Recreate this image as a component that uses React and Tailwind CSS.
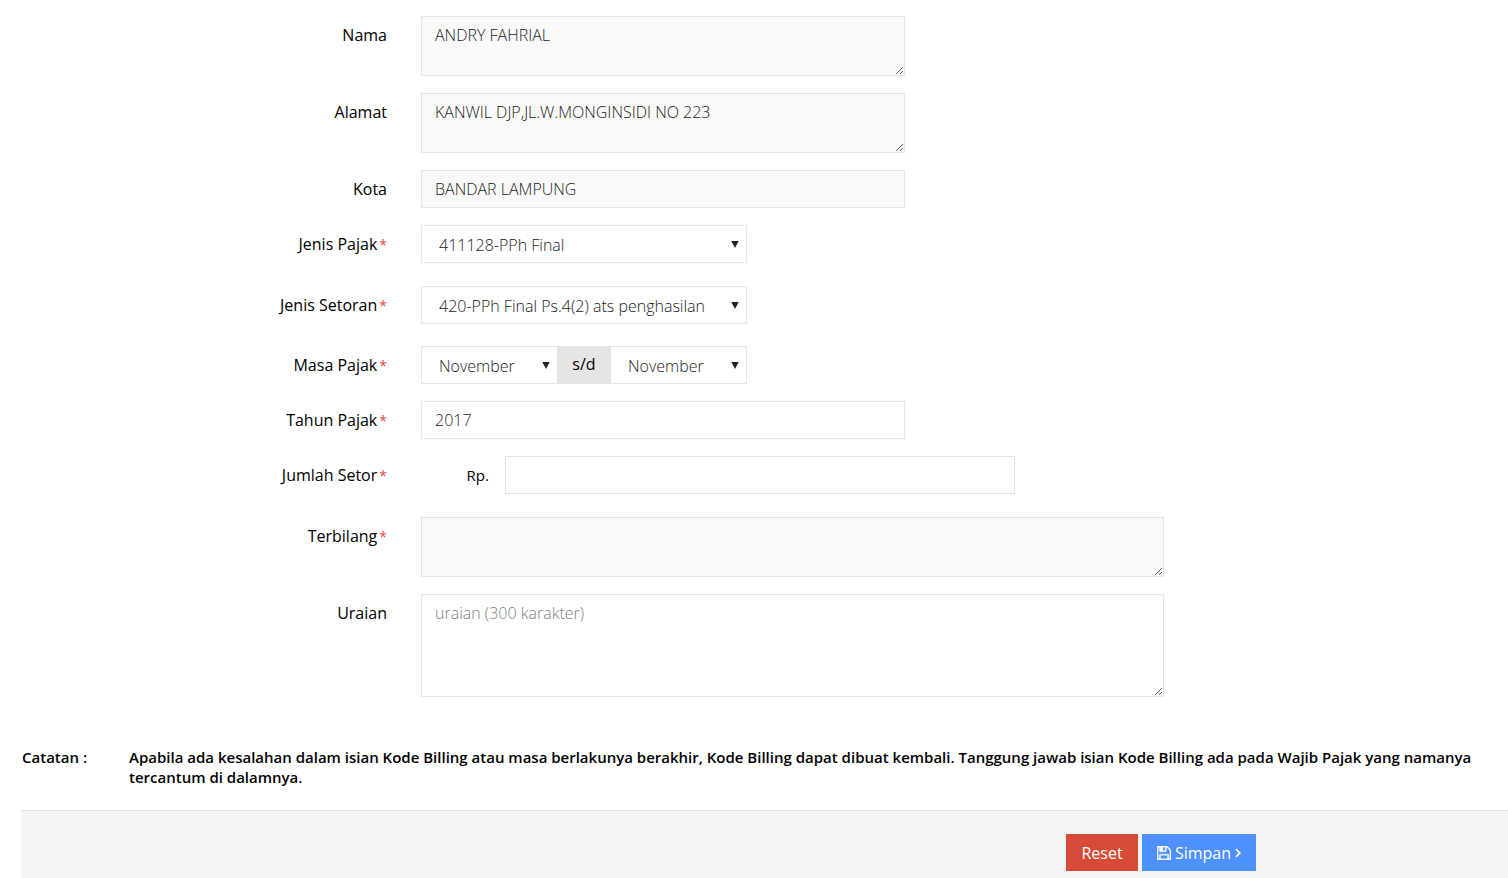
import { useState } from 'react'
import clsx from 'clsx'

const MONTHS = [
  'Januari', 'Februari', 'Maret', 'April', 'Mei', 'Juni',
  'Juli', 'Agustus', 'September', 'Oktober', 'November', 'Desember',
]

const control = 'block w-full border border-[#e5e5e5] px-[13px] text-base leading-[22px] font-light text-[#1a1a1a] outline-none placeholder:text-[#808080] focus:border-[#999]'

function FormRow({ id, label, required, gap = 'mb-[17px]', children }) {
  return (
    <div className={clsx('flex items-start', gap)}>
      <label htmlFor={id} className="w-1/4 shrink-0 pt-2 pr-[17px] text-right leading-[22px]">
        {label}
        {required && <span className="pl-0.5 text-sm text-[#e84848]">*</span>}
      </label>
      <div className="min-w-0 flex-1 px-[17px]">{children}</div>
    </div>
  )
}

function TextInput({ className, ...props }) {
  return <input type="text" className={clsx(control, 'h-[38px] read-only:bg-[#f9f9f9]', className)} {...props} />
}

function TextArea({ className, ...props }) {
  return <textarea className={clsx(control, 'resize py-[7px] read-only:bg-[#f9f9f9]', className)} {...props} />
}

function Select({ className, children, ...props }) {
  return (
    <div className={clsx('relative', className)}>
      <select
        className="block h-[38px] w-full appearance-none border border-[#e5e5e5] bg-white pt-0.5 pr-6 pl-[17px] text-base leading-[22px] font-light text-[#1a1a1a] outline-none"
        {...props}
      >
        {children}
      </select>
      <svg viewBox="0 0 8 7" className="pointer-events-none absolute top-4 right-2 h-[7px] w-2 fill-[#222]">
        <path d="M0.3 0h7.4L4 7z" />
      </svg>
    </div>
  )
}

function MonthSelect(props) {
  return (
    <Select className="flex-1" {...props}>
      {MONTHS.map((month) => (
        <option key={month}>{month}</option>
      ))}
    </Select>
  )
}

function SaveIcon() {
  return (
    <svg viewBox="0 0 1536 1536" className="size-3.5 fill-current stroke-current" strokeWidth="40">
      <path
        transform="translate(0 1408) scale(1 -1)"
        d="M384 0h768v384h-768v-384zM1280 0h128v896q0 14 -10 38.5t-20 34.5l-281 281q-10 10 -34 20t-39 10v-416q0 -40 -28 -68t-68 -28h-576q-40 0 -68 28t-28 68v416h-128v-1280h128v416q0 40 28 68t68 28h832q40 0 68 -28t28 -68v-416zM896 928v320q0 13 -9.5 22.5t-22.5 9.5h-192q-13 0 -22.5 -9.5t-9.5 -22.5v-320q0 -13 9.5 -22.5t22.5 -9.5h192q13 0 22.5 9.5t9.5 22.5zM1536 896v-928q0 -40 -28 -68t-68 -28h-1344q-40 0 -68 28t-28 68v1344q0 40 28 68t68 28h928q40 0 88 -20t76 -48l280 -280q28 -28 48 -76t20 -88z"
      />
    </svg>
  )
}

function AngleRightIcon() {
  return (
    <svg viewBox="0 0 6 10" className="h-2.5 w-1.5 fill-none stroke-current" strokeWidth="1.8">
      <path d="M1 1.2L4.8 5L1 8.8" />
    </svg>
  )
}

export default function App() {
  const [masaAwal, setMasaAwal] = useState('November')
  const [masaAkhir, setMasaAkhir] = useState('November')

  return (
    <form
      className="flex min-h-screen flex-col bg-white font-['Open_Sans',sans-serif] text-base text-black"
      onSubmit={(e) => e.preventDefault()}
    >
      <div className="pt-4 pl-9">
        <FormRow id="nama" label="Nama">
          <TextArea id="nama" className="h-[60px] max-w-[484px]" defaultValue="ANDRY FAHRIAL" readOnly />
        </FormRow>
        <FormRow id="alamat" label="Alamat">
          <TextArea id="alamat" className="h-[60px] max-w-[484px]" defaultValue="KANWIL DJP,JL.W.MONGINSIDI NO 223" readOnly />
        </FormRow>
        <FormRow id="kota" label="Kota">
          <TextInput id="kota" className="max-w-[484px]" defaultValue="BANDAR LAMPUNG" readOnly />
        </FormRow>
        <FormRow id="jenis-pajak" label="Jenis Pajak" required gap="mb-[23px]">
          <Select id="jenis-pajak" className="max-w-[326px]">
            <option>411128-PPh Final</option>
          </Select>
        </FormRow>
        <FormRow id="jenis-setoran" label="Jenis Setoran" required gap="mb-[22px]">
          <Select id="jenis-setoran" className="max-w-[326px]">
            <option>420-PPh Final Ps.4(2) ats penghasilan</option>
          </Select>
        </FormRow>
        <FormRow id="masa-awal" label="Masa Pajak" required>
          <div className="flex max-w-[326px]">
            <MonthSelect id="masa-awal" value={masaAwal} onChange={(e) => setMasaAwal(e.target.value)} />
            <label htmlFor="masa-akhir" className="w-[52px] bg-[#e5e5e5] pt-[7px] text-center leading-[22px]">s/d</label>
            <MonthSelect id="masa-akhir" value={masaAkhir} onChange={(e) => setMasaAkhir(e.target.value)} />
          </div>
        </FormRow>
        <FormRow id="tahun" label="Tahun Pajak" required>
          <TextInput id="tahun" className="max-w-[484px]" defaultValue="2017" />
        </FormRow>
        <FormRow id="jumlah" label="Jumlah Setor" required gap="mb-[23px]">
          <div className="flex items-center gap-4">
            <span className="w-[68px] shrink-0 text-right text-[15px] leading-[22px]">Rp.</span>
            <TextInput id="jumlah" className="max-w-[510px]" />
          </div>
        </FormRow>
        <FormRow id="terbilang" label="Terbilang" required>
          <TextArea id="terbilang" className="h-[60px] max-w-[743px]" readOnly />
        </FormRow>
        <FormRow id="uraian" label="Uraian">
          <TextArea id="uraian" className="h-[103px] max-w-[743px]" placeholder="uraian (300 karakter)" maxLength={300} />
        </FormRow>
      </div>

      <div className="flex pt-[33px] pr-4 pb-[23px] pl-[22px] text-[15px] leading-5 font-semibold">
        <p className="w-[107px] shrink-0">Catatan :</p>
        <p>
          Apabila ada kesalahan dalam isian Kode Billing atau masa berlakunya berakhir, Kode Billing dapat dibuat
          kembali. Tanggung jawab isian Kode Billing ada pada Wajib Pajak yang namanya tercantum di dalamnya.
        </p>
      </div>

      <div className="ml-[21px] flex flex-1 items-start justify-end gap-1 border-t border-[#e5e5e5] bg-[#f4f4f4] pt-[23px] pr-[252px]">
        <button type="reset" className="h-[37px] w-[72px] bg-[#d84a38] text-white">
          Reset
        </button>
        <button type="submit" className="flex h-[37px] w-[114px] items-center justify-center gap-1 bg-[#4d90fe] text-white">
          <SaveIcon />
          Simpan
          <AngleRightIcon />
        </button>
      </div>
    </form>
  )
}
